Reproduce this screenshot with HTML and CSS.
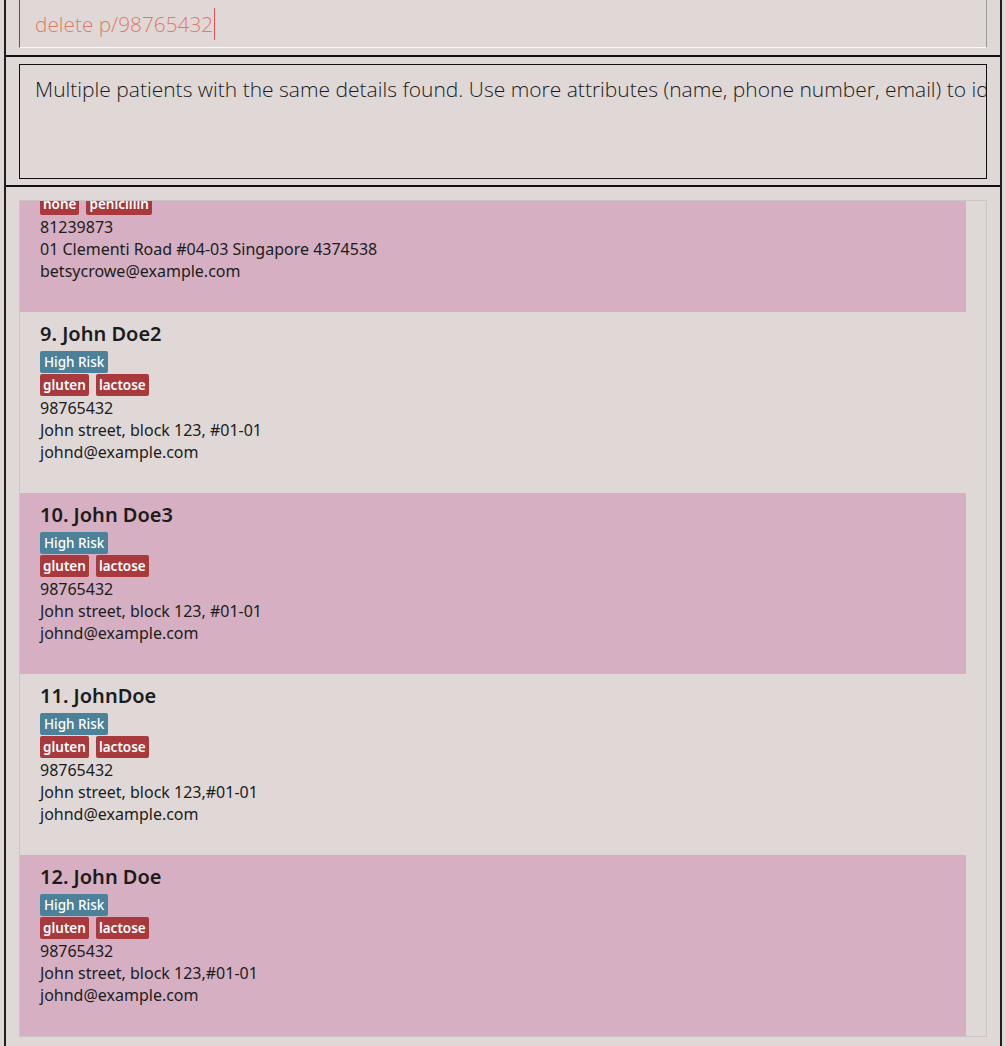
FILE: index.html
```html
<!DOCTYPE html>
<html>
<head>
<meta charset="utf-8">
<link rel="stylesheet" href="styles.css">
</head>
<body>
<div class="window">
  <div class="command-pane">
    <div class="command-box"><span class="cmd-text">delete p/98765432</span><span class="caret"></span></div>
  </div>
  <div class="result-pane">
    <div class="result-box">Multiple patients with the same details found. Use more attributes (name, phone number, email) to identify the patient.</div>
  </div>
  <div class="list-pane">
    <div class="list-box">
      <div class="list-scroll">
        <div class="cell even first">
          <div class="name">8. Betsy Crowe</div>
          <div class="tags"><span class="tag risk">Low Risk</span></div>
          <div class="tags"><span class="tag allergy">none</span><span class="tag allergy">penicillin</span></div>
          <div class="line">81239873</div>
          <div class="line">01 Clementi Road #04-03 Singapore 4374538</div>
          <div class="line">betsycrowe@example.com</div>
        </div>
        <div class="cell odd">
          <div class="name">9. John Doe2</div>
          <div class="tags"><span class="tag risk">High Risk</span></div>
          <div class="tags"><span class="tag allergy">gluten</span><span class="tag allergy">lactose</span></div>
          <div class="line">98765432</div>
          <div class="line">John street, block 123, #01-01</div>
          <div class="line">johnd@example.com</div>
        </div>
        <div class="cell even">
          <div class="name">10. John Doe3</div>
          <div class="tags"><span class="tag risk">High Risk</span></div>
          <div class="tags"><span class="tag allergy">gluten</span><span class="tag allergy">lactose</span></div>
          <div class="line">98765432</div>
          <div class="line">John street, block 123, #01-01</div>
          <div class="line">johnd@example.com</div>
        </div>
        <div class="cell odd">
          <div class="name">11. JohnDoe</div>
          <div class="tags"><span class="tag risk">High Risk</span></div>
          <div class="tags"><span class="tag allergy">gluten</span><span class="tag allergy">lactose</span></div>
          <div class="line">98765432</div>
          <div class="line">John street, block 123,#01-01</div>
          <div class="line">johnd@example.com</div>
        </div>
        <div class="cell even">
          <div class="name">12. John Doe</div>
          <div class="tags"><span class="tag risk">High Risk</span></div>
          <div class="tags"><span class="tag allergy">gluten</span><span class="tag allergy">lactose</span></div>
          <div class="line">98765432</div>
          <div class="line">John street, block 123,#01-01</div>
          <div class="line">johnd@example.com</div>
        </div>
      </div>
    </div>
  </div>
</div>
</body>
</html>
```

FILE: styles.css
```css
* { box-sizing: border-box; }
html, body { margin: 0; padding: 0; }
body {
  background: #dfd8d7;
  font-family: "Noto Sans", "Open Sans", sans-serif;
  color: #1c1c1c;
  overflow: hidden;
}
.window {
  margin-left: 4px;
  width: 998px;
  height: 1046px;
  border-left: 2px solid #1e1e1e;
  border-right: 2px solid #1e1e1e;
  display: flex;
  flex-direction: column;
  overflow: hidden;
}
.command-pane {
  height: 57px;
  padding: 0 13px;
  border-bottom: 2px solid #111;
  flex: none;
}
.command-box {
  height: 48px;
  border-left: 1px solid #555;
  border-right: 1px solid #9a9a9a;
  border-bottom: 1px solid #fafafa;
  padding-left: 15px;
  display: flex;
  align-items: center;
  font-family: "Open Sans", "Noto Sans", sans-serif;
  font-weight: 300;
  font-size: 20.8px;
  color: #e07a68;
}
.caret {
  display: inline-block;
  width: 1px;
  height: 32px;
  background: #d9534f;
  margin-left: 1px;
}
.result-pane {
  padding: 7px 13px 6px;
  border-bottom: 2px solid #111;
  flex: none;
}
.result-box {
  height: 115px;
  border: 1px solid #111;
  padding: 10px 15px;
  white-space: nowrap;
  overflow: hidden;
  font-family: "Open Sans", "Noto Sans", sans-serif;
  font-weight: 300;
  font-size: 21px;
  line-height: 28px;
  color: #1a1a1a;
}
.list-pane {
  padding: 13px 13px 0;
  flex: 1;
  min-height: 0;
}
.list-box {
  height: 837px;
  border: 1px solid #cbc6c5;
  overflow: hidden;
}
.list-scroll {
  width: 946px;
}
.cell {
  height: 181px;
  padding: 9px 0 0 20px;
  font-size: 16px;
}
.cell.first { margin-top: -70px; }
.cell.even { background: #d6afc2; }
.cell.odd { background: #dfd8d7; }
.name {
  font-size: 20px;
  font-weight: 600;
  line-height: 26px;
  margin-bottom: 4px;
}
.tags {
  display: flex;
  gap: 7px;
  margin-bottom: 1px;
}
.tag {
  height: 22px;
  line-height: 22px;
  padding: 0 4px;
  border-radius: 2px;
  color: #fff;
  font-size: 13.5px;
  font-weight: 500;
}
.tag.risk { background: #4b8199; }
.tag.allergy { background: #a8393c; font-weight: 600; font-size: 13.5px; padding: 0 3px; }
.line {
  line-height: 22px;
}
```
